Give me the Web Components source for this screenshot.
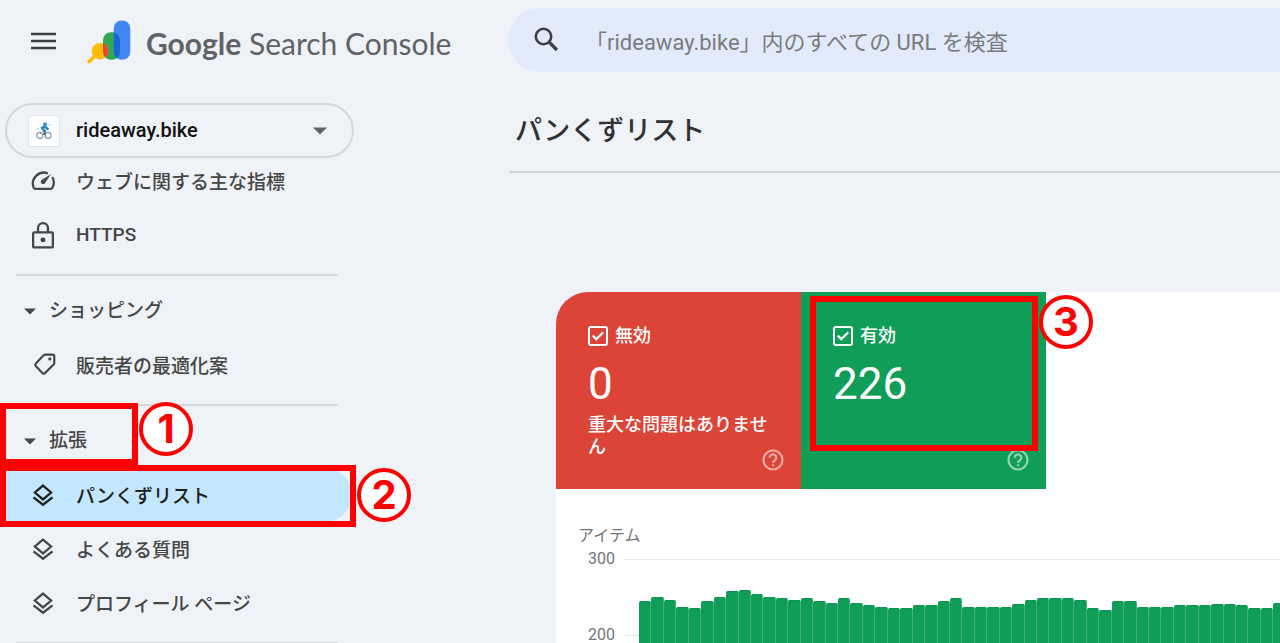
<!DOCTYPE html>
<html lang="ja">
<head>
<meta charset="utf-8">
<meta name="viewport" content="width=device-width, initial-scale=1">
<title>Google Search Console</title>
<style>
  :root {
    --bg: #eff3f8;
    --text: #444746;
    --dark: #1f1f1f;
    --line: #d3d7d9;
    --mark: #ff0000;
  }
  * { box-sizing: border-box; }
  body {
    margin: 0;
    height: 100vh;
    overflow: hidden;
    position: relative;
    background: var(--bg);
    color: var(--text);
    font-family: Roboto, "Noto Sans CJK JP", sans-serif;
  }
  .mark-section { top: 403px; left: 0; width: 138px; height: 62px; }
  .mark-item { top: 465px; left: 0; width: 356px; height: 62px; }
  .mark-valid { top: 296px; left: 810px; width: 228px; height: 155px; }
  .step-1 { top: 402px; left: 139px; }
  .step-2 { top: 468px; left: 357px; }
  .step-3 { top: 295px; left: 1039px; }
</style>
</head>
<body>
<console-app>
  <console-brand slot="side"></console-brand>
  <property-picker slot="side">rideaway.bike</property-picker>
  <side-nav slot="side">
    <nav-item icon="speed">ウェブに関する主な指標</nav-item>
    <nav-item icon="lock">HTTPS</nav-item>
    <nav-divider></nav-divider>
    <nav-section>ショッピング</nav-section>
    <nav-item icon="tag">販売者の最適化案</nav-item>
    <nav-divider></nav-divider>
    <nav-section>拡張</nav-section>
    <nav-item icon="layers" active>パンくずリスト</nav-item>
    <nav-item icon="layers">よくある質問</nav-item>
    <nav-item icon="layers">プロフィール ページ</nav-item>
    <nav-divider></nav-divider>
  </side-nav>

  <search-bar placeholder="「rideaway.bike」内のすべての URL を検査"></search-bar>
  <page-title>パンくずリスト</page-title>
  <report-card>
    <status-tile slot="tiles" label="無効" value="0" color="#db4437">重大な問題はありません</status-tile>
    <status-tile slot="tiles" label="有効" value="226" color="#0f9d58"></status-tile>
    <bar-chart label="アイテム"></bar-chart>
  </report-card>
</console-app>

<mark-box class="mark-section"></mark-box>
<mark-box class="mark-item"></mark-box>
<mark-box class="mark-valid"></mark-box>
<step-badge class="step-1">1</step-badge>
<step-badge class="step-2">2</step-badge>
<step-badge class="step-3">3</step-badge>

<script>
const ICONS = {
  speed: `<path d="M16.5 4.9A10.3 10.3 0 0 0 3.3 18.2Q3.9 19.3 5.2 19.3H18.8Q20.1 19.3 20.7 18.2A10.3 10.3 0 0 0 20.6 8.3" fill="none" stroke="currentColor" stroke-width="2.1"/><path d="M19.5 5.5 13.6 14.3A2.2 2.2 0 0 1 10.4 11.3Z" fill="currentColor"/>`,
  lock: `<rect x="2.9" y="9.5" width="18.2" height="14" rx="1" fill="none" stroke="currentColor" stroke-width="2.1"/><path d="M7.4 9.5V5.6a4.6 4.6 0 0 1 9.2 0V9.5" fill="none" stroke="currentColor" stroke-width="2.1"/><circle cx="12" cy="16.5" r="2.3" fill="currentColor"/>`,
  tag: `<path d="M14 2.4h6.8a1.6 1.6 0 0 1 1.6 1.6v6.2q0 .8-.6 1.4l-8 7.9q-1.1 1-2.2 0l-6.3-6.6q-1-1.1.1-2.2l7.2-7.6q.6-.7 1.4-.7Z" fill="none" stroke="currentColor" stroke-width="2"/><circle cx="18.3" cy="6.4" r="1.5" fill="currentColor"/>`,
  layers: `<path d="M12 3.3 19.5 9.7 12 16.1 4.5 9.7Z" fill="none" stroke="currentColor" stroke-width="2.1"/><path d="M3.2 14.2 12 21l8.8-6.8" fill="none" stroke="currentColor" stroke-width="2.1"/>`
};

class ShadowElement extends HTMLElement {
  constructor() {
    super();
    this.shadow = this.attachShadow({ mode: 'open' });
  }

  connectedCallback() {
    this.render();
  }
}

class ConsoleApp extends ShadowElement {
  render() {
    this.shadow.innerHTML = `
    <style>
      :host {
        display: grid;
        grid-template-columns: 508px minmax(0, 1fr);
        height: 100vh;
        overflow: hidden;
      }
      aside, main {
        min-width: 0;
        min-height: 0;
        overflow: hidden;
      }
    </style>
    <aside><slot name="side"></slot></aside>
    <main><slot></slot></main>`;
  }
}

class ConsoleBrand extends ShadowElement {
  render() {
    this.shadow.innerHTML = `
    <style>
      :host {
        display: flex;
        align-items: center;
        height: 84px;
        padding-left: 30px;
      }
      button {
        border: 0;
        padding: 0;
        background: none;
        color: #3c4043;
        width: 26px;
        height: 26px;
        margin-right: 31px;
      }
      svg { display: block; }
      .name {
        margin-left: 15px;
        padding-top: 2px;
        font: 400 30px/40px Lato, sans-serif;
        color: #5f6368;
        white-space: nowrap;
      }
      b { font-weight: 700; }
    </style>
    <button aria-label="メニュー">
      <svg width="26" height="26" viewBox="0 0 26 26"><path d="M1 5h25M1 12h25M1 19h25" stroke="currentColor" stroke-width="2.6"/></svg>
    </button>
    <svg width="44" height="44" viewBox="0 0 44 43">
      <defs>
        <clipPath id="g"><rect x="16" y="11.7" width="17" height="27.6" rx="8"/></clipPath>
      </defs>
      <path d="M2.2 41 9 34.5" stroke="#fbbc04" stroke-width="3.6" stroke-linecap="round"/>
      <rect x="16" y="11.7" width="17" height="27.6" rx="8" fill="#34a853"/>
      <circle cx="13" cy="30.7" r="8.3" fill="#fbbc04"/>
      <rect x="26.7" y="0" width="16.6" height="39.3" rx="8" fill="#4285f4"/>
      <g clip-path="url(#g)">
        <circle cx="13" cy="30.7" r="8.3" fill="#ea4335"/>
        <rect x="26.7" y="0" width="16.6" height="39.3" rx="8" fill="#1967d2"/>
      </g>
    </svg>
    <span class="name"><b>Google</b> Search Console</span>`;
  }
}

class PropertyPicker extends ShadowElement {
  render() {
    this.shadow.innerHTML = `
    <style>
      :host {
        display: block;
        width: 349px;
        margin: 19px 0 -4px 5px;
      }
      button {
        display: flex;
        align-items: center;
        width: 100%;
        height: 55px;
        padding: 0 25px 0 21px;
        border: 2px solid var(--line);
        border-radius: 28px;
        background: var(--bg);
        color: #111;
        font: 500 20px/24px Roboto, sans-serif;
        text-align: left;
      }
      .favicon {
        display: grid;
        place-items: center;
        box-sizing: border-box;
        width: 32px;
        height: 32px;
        margin-right: 16px;
        border: 1px solid #dfe2e6;
        border-radius: 3px;
        background: #fff;
      }
      .label { flex: 1; padding-bottom: 2px; }
    </style>
    <button>
      <span class="favicon">
        <svg width="16" height="18" viewBox="0 0 16 18">
          <g fill="none" stroke="#8fa3b8" stroke-width="1.3"><circle cx="3.7" cy="13.5" r="3"/><circle cx="12" cy="13.5" r="3"/></g>
          <path d="M4 12 7 9l3 3-1 3" fill="none" stroke="#c98a55" stroke-width="1"/>
          <path d="M10 3.5 6 6l3 3-1 4M9 5l3.5 2.5" fill="none" stroke="#2f7fc0" stroke-width="2.4"/>
          <circle cx="9" cy="2.2" r="2" fill="#3b93d4"/>
          <path d="M0 7h3M11 3h4" stroke="#a9d3ee" stroke-width="1"/>
        </svg>
      </span>
      <span class="label"><slot></slot></span>
      <svg width="14" height="8" viewBox="0 0 14 8"><path d="M0 .5h14L7 7.5Z" fill="#5f6368"/></svg>
    </button>`;
  }
}

class SideNav extends ShadowElement {
  render() {
    this.shadow.innerHTML = `
    <style>
      :host {
        display: block;
        width: 352px;
        font-size: 19px;
        font-weight: 500;
      }
    </style>
    <nav><slot></slot></nav>`;
  }
}

class NavItem extends ShadowElement {
  render() {
    this.shadow.innerHTML = `
    <style>
      :host { display: block; }
      a {
        display: flex;
        align-items: center;
        gap: 20px;
        height: 54px;
        padding-left: 30px;
        border-radius: 0 27px 27px 0;
        color: var(--text);
        text-decoration: none;
        white-space: nowrap;
      }
      svg { overflow: visible; }
      span { padding-bottom: 1px; }
      :host([active]) a { background: #c2e7ff; color: var(--dark); }
    </style>
    <a href="#">
      <svg width="26" height="26" viewBox="0 0 24 24">${ICONS[this.getAttribute('icon')]}</svg>
      <span><slot></slot></span>
    </a>`;
  }
}

class NavSection extends ShadowElement {
  render() {
    this.shadow.innerHTML = `
    <style>
      :host { display: block; }
      button {
        display: flex;
        align-items: center;
        gap: 13px;
        width: 100%;
        height: 54px;
        padding: 0 0 0 24px;
        border: 0;
        background: none;
        color: var(--text);
        font: inherit;
      }
      span { padding-bottom: 5px; }
    </style>
    <button aria-expanded="true">
      <svg width="12" height="7" viewBox="0 0 12 7"><path d="M0 .5h12L6 6.5Z" fill="currentColor"/></svg>
      <span><slot></slot></span>
    </button>`;
  }
}

class NavDivider extends ShadowElement {
  render() {
    this.shadow.innerHTML = `
    <style>
      :host {
        display: block;
        height: 2px;
        margin: 12px 14px 8px 16px;
        background: var(--line);
      }
    </style>`;
  }
}

class SearchBar extends ShadowElement {
  render() {
    this.shadow.innerHTML = `
    <style>
      :host { display: block; padding-top: 8px; }
      label {
        display: flex;
        align-items: center;
        gap: 24px;
        height: 64px;
        padding-left: 25px;
        border-radius: 32px 0 0 32px;
        background: #e1ebfc;
        color: #3c4043;
      }
      input {
        flex: 1;
        min-width: 0;
        height: 40px;
        padding: 4px 0 0;
        border: 0;
        outline: 0;
        background: none;
        font: 400 22px/32px Roboto, "Noto Sans CJK JP", sans-serif;
      }
      input::placeholder { color: #7a7b7d; opacity: 1; }
    </style>
    <label>
      <svg width="28" height="28" viewBox="0 0 28 28" aria-hidden="true">
        <circle cx="10.5" cy="10.5" r="7.7" fill="none" stroke="currentColor" stroke-width="2.6"/>
        <path d="m16 16 8 8" stroke="currentColor" stroke-width="3.2"/>
      </svg>
      <input type="text" aria-label="URL 検査" placeholder="${this.getAttribute('placeholder')}">
    </label>`;
  }
}

class PageTitle extends ShadowElement {
  render() {
    this.shadow.innerHTML = `
    <style>
      :host {
        display: block;
        margin-left: 1px;
        padding: 39px 0 20px 6px;
        border-bottom: 2px solid var(--line);
      }
      h1 {
        margin: 0;
        font-size: 27px;
        line-height: 40px;
        font-weight: 500;
        color: #303134;
      }
    </style>
    <h1><slot></slot></h1>`;
  }
}

class ReportCard extends ShadowElement {
  render() {
    this.shadow.innerHTML = `
    <style>
      :host {
        display: block;
        margin: 119px 0 0 48px;
        border-radius: 32px 0 0 0;
        background: #fff;
        overflow: hidden;
      }
      .tiles {
        display: grid;
        grid-template-columns: repeat(auto-fill, 245px);
      }
    </style>
    <div class="tiles"><slot name="tiles"></slot></div>
    <slot></slot>`;
  }
}

class StatusTile extends ShadowElement {
  render() {
    this.shadow.innerHTML = `
    <style>
      :host {
        display: flex;
        flex-direction: column;
        height: 197px;
        padding: 33px 28px 18px 32px;
        background: ${this.getAttribute('color')};
        color: #fff;
        font-size: 18px;
        font-weight: 500;
        line-height: 22px;
      }
      label {
        display: flex;
        align-items: center;
        gap: 7px;
      }
      input {
        appearance: none;
        display: grid;
        place-items: center;
        width: 20px;
        height: 20px;
        margin: 0;
        border: 2px solid #fff;
        border-radius: 3px;
      }
      input:checked::before {
        content: "";
        width: 12px;
        height: 10px;
        background: #fff;
        clip-path: polygon(0 54%, 12% 38%, 36% 66%, 88% 4%, 100% 20%, 36% 98%);
      }
      .value {
        font-size: 44px;
        line-height: 52px;
        font-weight: 400;
        margin: 11px 0 4px;
      }
      .note { flex: 1; margin-right: -4px; }
      .help {
        align-self: flex-end;
        margin-right: -11px;
        margin-top: -11px;
        padding: 0;
        border: 0;
        background: none;
        color: #fff;
        opacity: 0.55;
        height: 22px;
      }
      svg { display: block; }
    </style>
    <label><input type="checkbox" checked>${this.getAttribute('label')}</label>
    <div class="value">${this.getAttribute('value')}</div>
    <div class="note"><slot></slot></div>
    <button class="help" aria-label="ヘルプ">
      <svg width="22" height="22" viewBox="0 0 22 22" fill="none" stroke="currentColor" stroke-width="2.2">
        <circle cx="11" cy="11" r="9.5"/>
        <path d="M7.7 8.7a3.3 3.3 0 1 1 5.4 2.5Q11 12.5 11 14"/>
        <path d="M11 15.3v2"/>
      </svg>
    </button>`;
  }
}

class BarChart extends ShadowElement {
  constructor() {
    super();
    this.max = 300;
    this.values = [
      243, 249, 245, 236, 234, 243, 249, 256, 258, 252, 249, 247, 245,
      247, 243, 241, 247, 241, 238, 236, 234, 234, 238, 238, 243, 247,
      236, 236, 236, 236, 240, 245, 247, 248, 248, 245, 234, 231, 243,
      243, 236, 236, 236, 238, 238, 238, 240, 240, 238, 234, 234, 241
    ];
  }

  render() {
    const rows = [300, 200].map(n => `<div class="row"><span>${n}</span></div>`).join('');
    const bars = this.values.map(v => `<i style="height: ${v / this.max * 100}%"></i>`).join('');
    this.shadow.innerHTML = `
    <style>
      :host {
        display: block;
        padding-top: 35px;
        font-size: 16px;
        color: #757575;
      }
      .label {
        line-height: 24px;
        padding: 0 0 11px 22px;
      }
      .plot { display: grid; }
      .rows, .bars { grid-area: 1 / 1; }
      .row {
        display: flex;
        gap: 8px;
        height: 76px;
      }
      .row span {
        width: 59px;
        line-height: 16px;
        margin-top: -8px;
        text-align: right;
      }
      .row::after {
        content: "";
        flex: 1;
        border-top: 1px solid #ebebeb;
      }
      .bars {
        display: flex;
        align-items: flex-end;
        height: 228px;
        margin: 0 -6px 0 83px;
      }
      .bars i {
        flex: 1;
        background: #0f9d58;
        border-top: 1px solid #0b9350;
        border-right: 1px solid #3fae79;
        border-radius: 2px 2px 0 0;
      }
    </style>
    <div class="label">${this.getAttribute('label')}</div>
    <div class="plot">
      <div class="rows">${rows}</div>
      <div class="bars">${bars}</div>
    </div>`;
  }
}

class MarkBox extends ShadowElement {
  render() {
    this.shadow.innerHTML = `
    <style>
      :host {
        position: absolute;
        border: 6px solid var(--mark);
        pointer-events: none;
      }
    </style>`;
  }
}

class StepBadge extends ShadowElement {
  render() {
    this.shadow.innerHTML = `
    <style>
      :host {
        position: absolute;
        display: grid;
        place-items: center;
        width: 54px;
        height: 54px;
        border: 4px solid var(--mark);
        border-radius: 50%;
        background: #fff;
        color: var(--mark);
        font: 700 40px/46px Inter, sans-serif;
      }
    </style>
    <span><slot></slot></span>`;
  }
}

customElements.define('console-app', ConsoleApp);
customElements.define('console-brand', ConsoleBrand);
customElements.define('property-picker', PropertyPicker);
customElements.define('side-nav', SideNav);
customElements.define('nav-item', NavItem);
customElements.define('nav-section', NavSection);
customElements.define('nav-divider', NavDivider);
customElements.define('search-bar', SearchBar);
customElements.define('page-title', PageTitle);
customElements.define('report-card', ReportCard);
customElements.define('status-tile', StatusTile);
customElements.define('bar-chart', BarChart);
customElements.define('mark-box', MarkBox);
customElements.define('step-badge', StepBadge);
</script>
</body>
</html>
